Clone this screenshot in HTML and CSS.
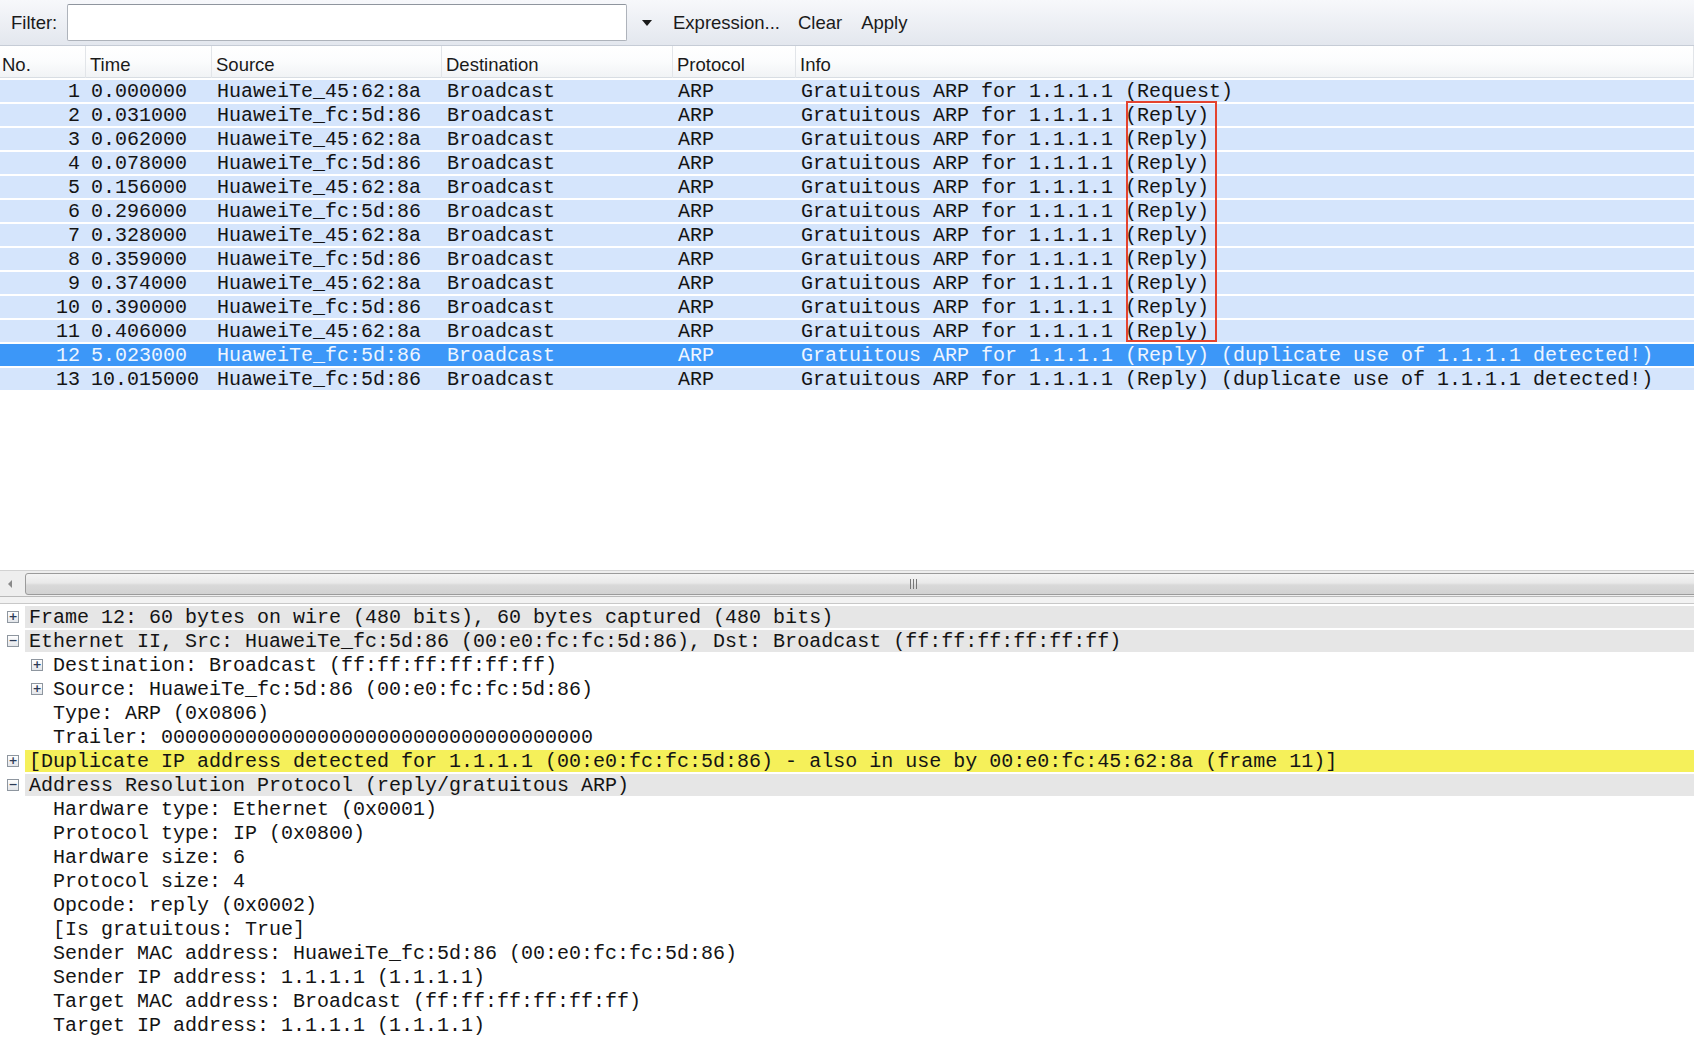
FILE: index.html
```html
<!DOCTYPE html>
<html>
<head>
<meta charset="utf-8">
<title>Wireshark - ARP</title>
<link rel="stylesheet" href="styles.css">
</head>
<body>
<div class="app">
  <div class="toolbar">
    <span class="tb-label">Filter:</span>
    <div class="filter-input"></div>
    <span class="drop-arrow"></span>
    <span class="tb-btn tb-expr">Expression...</span>
    <span class="tb-btn tb-clear">Clear</span>
    <span class="tb-btn tb-apply">Apply</span>
  </div>

  <div class="plist">
    <div class="prow hdr">
      <div class="c c-no">No.</div>
      <div class="c c-time">Time</div>
      <div class="c c-src">Source</div>
      <div class="c c-dst">Destination</div>
      <div class="c c-proto">Protocol</div>
      <div class="c c-info">Info</div>
    </div>
    <div class="rows">
      <div class="prow"><div class="c c-no">1</div><div class="c c-time">0.000000</div><div class="c c-src">HuaweiTe_45:62:8a</div><div class="c c-dst">Broadcast</div><div class="c c-proto">ARP</div><div class="c c-info">Gratuitous ARP for 1.1.1.1 (Request)</div></div>
      <div class="prow"><div class="c c-no">2</div><div class="c c-time">0.031000</div><div class="c c-src">HuaweiTe_fc:5d:86</div><div class="c c-dst">Broadcast</div><div class="c c-proto">ARP</div><div class="c c-info">Gratuitous ARP for 1.1.1.1 (Reply)</div></div>
      <div class="prow"><div class="c c-no">3</div><div class="c c-time">0.062000</div><div class="c c-src">HuaweiTe_45:62:8a</div><div class="c c-dst">Broadcast</div><div class="c c-proto">ARP</div><div class="c c-info">Gratuitous ARP for 1.1.1.1 (Reply)</div></div>
      <div class="prow"><div class="c c-no">4</div><div class="c c-time">0.078000</div><div class="c c-src">HuaweiTe_fc:5d:86</div><div class="c c-dst">Broadcast</div><div class="c c-proto">ARP</div><div class="c c-info">Gratuitous ARP for 1.1.1.1 (Reply)</div></div>
      <div class="prow"><div class="c c-no">5</div><div class="c c-time">0.156000</div><div class="c c-src">HuaweiTe_45:62:8a</div><div class="c c-dst">Broadcast</div><div class="c c-proto">ARP</div><div class="c c-info">Gratuitous ARP for 1.1.1.1 (Reply)</div></div>
      <div class="prow"><div class="c c-no">6</div><div class="c c-time">0.296000</div><div class="c c-src">HuaweiTe_fc:5d:86</div><div class="c c-dst">Broadcast</div><div class="c c-proto">ARP</div><div class="c c-info">Gratuitous ARP for 1.1.1.1 (Reply)</div></div>
      <div class="prow"><div class="c c-no">7</div><div class="c c-time">0.328000</div><div class="c c-src">HuaweiTe_45:62:8a</div><div class="c c-dst">Broadcast</div><div class="c c-proto">ARP</div><div class="c c-info">Gratuitous ARP for 1.1.1.1 (Reply)</div></div>
      <div class="prow"><div class="c c-no">8</div><div class="c c-time">0.359000</div><div class="c c-src">HuaweiTe_fc:5d:86</div><div class="c c-dst">Broadcast</div><div class="c c-proto">ARP</div><div class="c c-info">Gratuitous ARP for 1.1.1.1 (Reply)</div></div>
      <div class="prow"><div class="c c-no">9</div><div class="c c-time">0.374000</div><div class="c c-src">HuaweiTe_45:62:8a</div><div class="c c-dst">Broadcast</div><div class="c c-proto">ARP</div><div class="c c-info">Gratuitous ARP for 1.1.1.1 (Reply)</div></div>
      <div class="prow"><div class="c c-no">10</div><div class="c c-time">0.390000</div><div class="c c-src">HuaweiTe_fc:5d:86</div><div class="c c-dst">Broadcast</div><div class="c c-proto">ARP</div><div class="c c-info">Gratuitous ARP for 1.1.1.1 (Reply)</div></div>
      <div class="prow"><div class="c c-no">11</div><div class="c c-time">0.406000</div><div class="c c-src">HuaweiTe_45:62:8a</div><div class="c c-dst">Broadcast</div><div class="c c-proto">ARP</div><div class="c c-info">Gratuitous ARP for 1.1.1.1 (Reply)</div></div>
      <div class="prow sel"><div class="c c-no">12</div><div class="c c-time">5.023000</div><div class="c c-src">HuaweiTe_fc:5d:86</div><div class="c c-dst">Broadcast</div><div class="c c-proto">ARP</div><div class="c c-info">Gratuitous ARP for 1.1.1.1 (Reply) (duplicate use of 1.1.1.1 detected!)</div></div>
      <div class="prow"><div class="c c-no">13</div><div class="c c-time">10.015000</div><div class="c c-src">HuaweiTe_fc:5d:86</div><div class="c c-dst">Broadcast</div><div class="c c-proto">ARP</div><div class="c c-info">Gratuitous ARP for 1.1.1.1 (Reply) (duplicate use of 1.1.1.1 detected!)</div></div>
      <div class="mark-box"></div>
    </div>
    <div class="plist-empty"></div>
  </div>

  <div class="hscroll">
    <span class="hs-arrow"></span>
    <div class="hs-thumb"><span class="hs-grip"></span></div>
  </div>
  <div class="splitter"></div>

  <div class="details">
    <div class="drow l0"><span class="exp plus"></span><span class="lbl top">Frame 12: 60 bytes on wire (480 bits), 60 bytes captured (480 bits)</span></div>
    <div class="drow l0"><span class="exp minus"></span><span class="lbl top">Ethernet II, Src: HuaweiTe_fc:5d:86 (00:e0:fc:fc:5d:86), Dst: Broadcast (ff:ff:ff:ff:ff:ff)</span></div>
    <div class="drow l1"><span class="exp plus"></span><span class="lbl">Destination: Broadcast (ff:ff:ff:ff:ff:ff)</span></div>
    <div class="drow l1"><span class="exp plus"></span><span class="lbl">Source: HuaweiTe_fc:5d:86 (00:e0:fc:fc:5d:86)</span></div>
    <div class="drow l1"><span class="exp none"></span><span class="lbl">Type: ARP (0x0806)</span></div>
    <div class="drow l1"><span class="exp none"></span><span class="lbl">Trailer: 000000000000000000000000000000000000</span></div>
    <div class="drow l0"><span class="exp plus"></span><span class="lbl warn">[Duplicate IP address detected for 1.1.1.1 (00:e0:fc:fc:5d:86) - also in use by 00:e0:fc:45:62:8a (frame 11)]</span></div>
    <div class="drow l0"><span class="exp minus"></span><span class="lbl top">Address Resolution Protocol (reply/gratuitous ARP)</span></div>
    <div class="drow l1"><span class="exp none"></span><span class="lbl">Hardware type: Ethernet (0x0001)</span></div>
    <div class="drow l1"><span class="exp none"></span><span class="lbl">Protocol type: IP (0x0800)</span></div>
    <div class="drow l1"><span class="exp none"></span><span class="lbl">Hardware size: 6</span></div>
    <div class="drow l1"><span class="exp none"></span><span class="lbl">Protocol size: 4</span></div>
    <div class="drow l1"><span class="exp none"></span><span class="lbl">Opcode: reply (0x0002)</span></div>
    <div class="drow l1"><span class="exp none"></span><span class="lbl">[Is gratuitous: True]</span></div>
    <div class="drow l1"><span class="exp none"></span><span class="lbl">Sender MAC address: HuaweiTe_fc:5d:86 (00:e0:fc:fc:5d:86)</span></div>
    <div class="drow l1"><span class="exp none"></span><span class="lbl">Sender IP address: 1.1.1.1 (1.1.1.1)</span></div>
    <div class="drow l1"><span class="exp none"></span><span class="lbl">Target MAC address: Broadcast (ff:ff:ff:ff:ff:ff)</span></div>
    <div class="drow l1"><span class="exp none"></span><span class="lbl">Target IP address: 1.1.1.1 (1.1.1.1)</span></div>
  </div>
</div>
</body>
</html>
```

FILE: styles.css
```css
html, body {
  margin: 0;
  padding: 0;
  background: #ffffff;
}
body {
  width: 1694px;
  height: 1062px;
  overflow: hidden;
  font-family: "Liberation Sans", Arial, sans-serif;
  color: #111;
}
.app {
  display: flex;
  flex-direction: column;
  width: 1694px;
  height: 1062px;
}

/* ---------- toolbar ---------- */
.toolbar {
  height: 45px;
  flex: none;
  display: flex;
  align-items: center;
  background: linear-gradient(#f7f8fb, #e3e7ee);
  border-bottom: 1px solid #c6ccd6;
  font-size: 18.5px;
  color: #1b1b1b;
}
.tb-label {
  margin-left: 11px;
  width: 56px;
}
.filter-input {
  width: 558px;
  height: 35px;
  background: #fff;
  border: 1px solid #aeb3bb;
  border-top-color: #8f959e;
  border-radius: 2px;
}
.drop-arrow {
  width: 0;
  height: 0;
  margin-left: 15px;
  border-left: 5px solid transparent;
  border-right: 5px solid transparent;
  border-top: 6px solid #1a1a1a;
}
.tb-expr { margin-left: 21px; }
.tb-clear { margin-left: 18px; }
.tb-apply { margin-left: 19px; }

/* ---------- packet list ---------- */
.plist {
  flex: none;
  display: flex;
  flex-direction: column;
}
.prow {
  display: grid;
  grid-template-columns: 86px 126px 230px 231px 123px 1fr;
  height: 24px;
  box-sizing: border-box;
  border-top: 2px solid #fff;
  background: #d5e5fc;
  font-family: "Liberation Mono", "DejaVu Sans Mono", monospace;
  font-size: 20px;
  line-height: 23px;
  color: #141414;
  white-space: pre;
}
.prow .c {
  padding-left: 5px;
  overflow: visible;
}
.prow .c-no {
  text-align: right;
  padding-left: 0;
  padding-right: 6px;
}
.prow.sel {
  background: #3c97f8;
  color: #eef5ff;
}
.prow.hdr {
  height: 32px;
  border-top: none;
  border-bottom: 1px solid #d8dde3;
  background: linear-gradient(#ffffff 0%, #fbfcfd 50%, #f1f3f5 100%);
  font-family: "Liberation Sans", Arial, sans-serif;
  font-size: 18.5px;
  line-height: 38px;
  color: #1a1a1a;
}
.prow.hdr .c {
  border-right: 1px solid #e2e5e9;
  padding-left: 4px;
}
.prow.hdr .c-no {
  text-align: left;
  padding-left: 2px;
  padding-right: 0;
}
.rows {
  position: relative;
}
.mark-box {
  position: absolute;
  left: 1126px;
  top: 23px;
  width: 91px;
  height: 241px;
  box-sizing: border-box;
  border: 2.5px solid #e4432f;
}
.plist-empty {
  height: 180px;
}

/* ---------- horizontal scrollbar ---------- */
.hscroll {
  flex: none;
  height: 26px;
  box-sizing: border-box;
  display: flex;
  align-items: center;
  background: #eeeeee;
  border-top: 1px solid #d2d2d2;
}
.hs-arrow {
  width: 0;
  height: 0;
  margin-left: 8px;
  margin-right: 13px;
  border-top: 4px solid transparent;
  border-bottom: 4px solid transparent;
  border-right: 4px solid #8a8a8a;
}
.hs-thumb {
  flex: 1;
  height: 22px;
  margin-right: -6px;
  box-sizing: border-box;
  border: 1px solid #9b9b9b;
  border-radius: 3px 0 0 3px;
  background: linear-gradient(#f4f4f4 0%, #e9e9e9 45%, #d9d9d9 55%, #d2d2d2 100%);
  position: relative;
}
.hs-grip {
  position: absolute;
  left: 884px;
  top: 5px;
  width: 7px;
  height: 10px;
  background: repeating-linear-gradient(90deg, #777 0, #777 1px, transparent 1px, transparent 3px);
}
.splitter {
  flex: none;
  height: 8px;
  box-sizing: border-box;
  background: #f2f2f2;
  border-top: 1px solid #b9b9b9;
  border-bottom: 1px solid #c8c8c8;
}

/* ---------- details tree ---------- */
.details {
  flex: none;
  display: flex;
  flex-direction: column;
}
.drow {
  display: flex;
  height: 24px;
  box-sizing: border-box;
  padding-top: 2px;
  font-family: "Liberation Mono", "DejaVu Sans Mono", monospace;
  font-size: 20px;
  line-height: 23px;
  color: #141414;
  white-space: pre;
}
.drow.l1 {
  padding-left: 24px;
}
.exp {
  flex: none;
  width: 25px;
  height: 22px;
  position: relative;
}
.exp.plus::before,
.exp.minus::before {
  content: "";
  position: absolute;
  left: 7px;
  top: 5px;
  width: 12px;
  height: 12px;
  box-sizing: border-box;
  border: 1px solid #8e969f;
  background: linear-gradient(#ffffff, #e3e6ea);
}
.exp.plus::after,
.exp.minus::after {
  position: absolute;
  left: 7px;
  top: 5px;
  width: 12px;
  height: 12px;
  line-height: 11px;
  text-align: center;
  font-family: "DejaVu Sans", sans-serif;
  font-size: 11px;
  font-weight: bold;
  color: #2b3a55;
}
.exp.plus::after { content: "+"; }
.exp.minus::after { content: "\2212"; }
.lbl {
  flex: 1;
  padding-left: 4px;
  height: 22px;
}
.lbl.top {
  background: #e6e6e6;
}
.lbl.warn {
  background: #f5f05a;
}
```
